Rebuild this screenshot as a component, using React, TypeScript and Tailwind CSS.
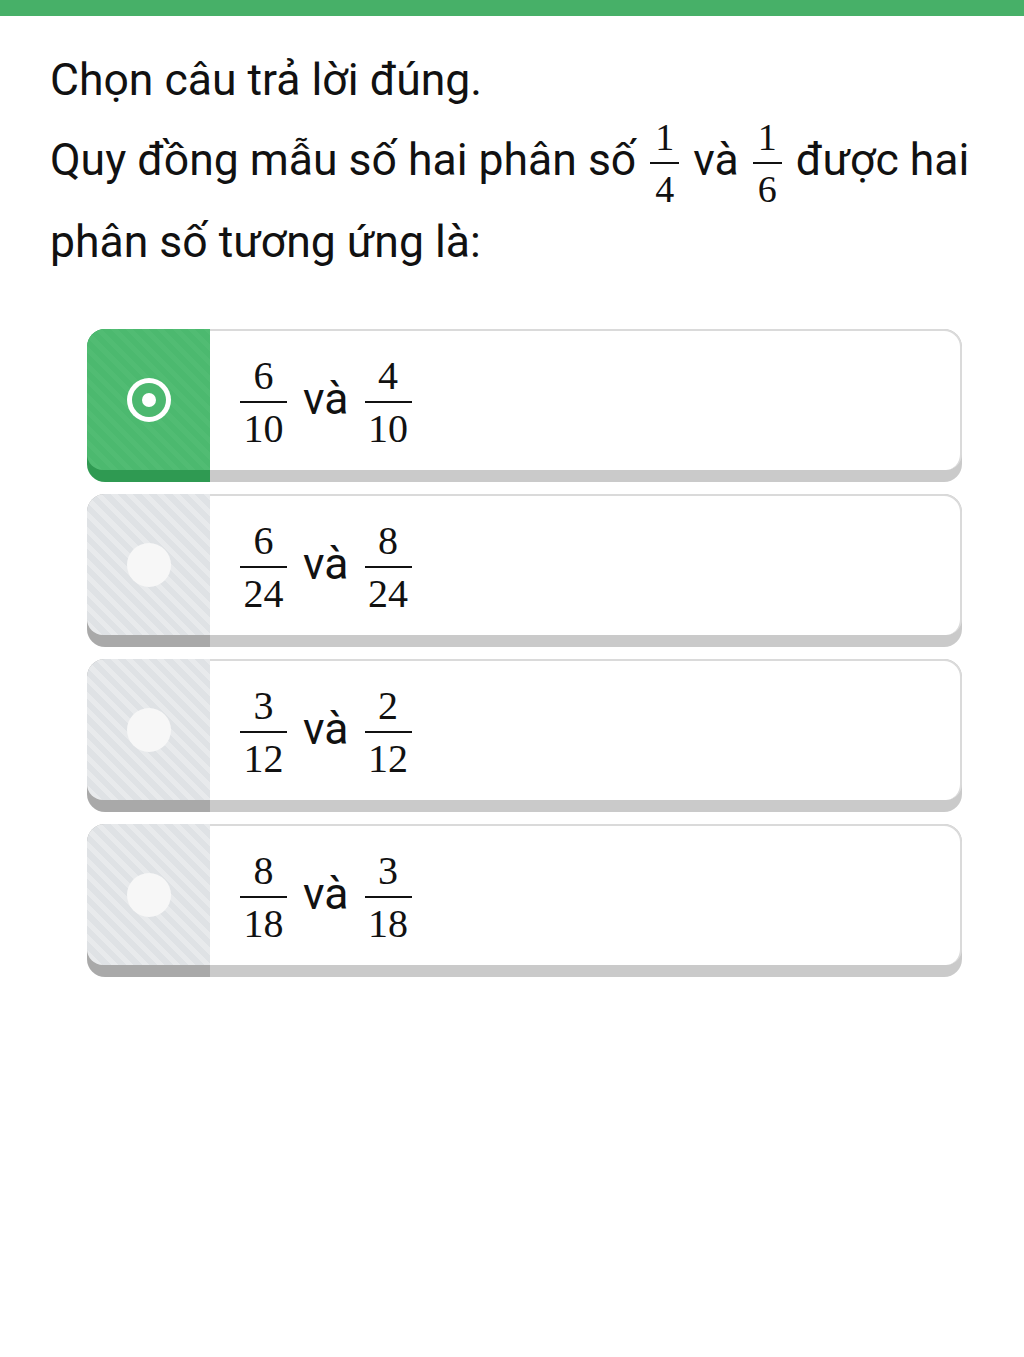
import React from "react";

// stacked fraction, sits on the text's middle like in math mode
function Frac({ top, bottom, size = "q" }: { top: string; bottom: string; size?: "q" | "o" }) {
  const digits =
    size === "q"
      ? "px-[5px] text-[38px] leading-[26px]"
      : "px-[3.5px] text-[40px] leading-[27px]";
  return (
    <span
      className={
        size === "q"
          ? "mx-[3px] inline-flex flex-col items-center align-middle font-['Liberation_Serif',serif] text-[#111]"
          : "mx-[5px] inline-flex flex-col items-center align-middle font-['Liberation_Serif',serif] text-[#111]"
      }
    >
      <span className={`${digits} mb-[12px]`}>{top}</span>
      <span className="block h-[2px] w-full bg-[#111]" />
      <span className={`${digits} mt-[12px]`}>{bottom}</span>
    </span>
  );
}

function Radio({ selected }: { selected: boolean }) {
  if (selected) {
    return (
      <div className="flex h-[44px] w-[44px] items-center justify-center rounded-full bg-white">
        <div className="flex h-[34px] w-[34px] items-center justify-center rounded-full bg-[#4cb86f]">
          <div className="h-[14px] w-[14px] rounded-full bg-white" />
        </div>
      </div>
    );
  }
  return <div className="h-[44px] w-[44px] rounded-full bg-[#f7f7f7]" />;
}

function Option({ a, b, selected = false }: { a: [string, string]; b: [string, string]; selected?: boolean }) {
  return (
    <div className="flex h-[153px] overflow-hidden rounded-[18px]">
      <div className={selected ? "w-[123px] shrink-0 bg-[#2f9a52]" : "w-[123px] shrink-0 bg-[#a9a9a9]"}>
        <div
          className={
            selected
              ? "flex h-[141px] items-center justify-center rounded-bl-[16px] bg-[repeating-linear-gradient(45deg,#4cb96f_0px,#4cb96f_6px,#51bc73_6px,#51bc73_11px)]"
              : "flex h-[141px] items-center justify-center rounded-bl-[16px] bg-[repeating-linear-gradient(45deg,#dfe2e5_0px,#dfe2e5_6px,#e8eaec_6px,#e8eaec_11px)]"
          }
        >
          <Radio selected={selected} />
        </div>
      </div>
      <div className="flex-1 bg-[#cacaca]">
        <div className="flex h-[141px] items-center rounded-tr-[18px] rounded-br-[16px] border-t-2 border-r-2 border-[#dadada] bg-white pl-[25px]">
          <div className="text-[44.5px] leading-[80px] text-[#111]">
            <Frac top={a[0]} bottom={a[1]} size="o" /> và <Frac top={b[0]} bottom={b[1]} size="o" />
          </div>
        </div>
      </div>
    </div>
  );
}

export default function App() {
  const options: { a: [string, string]; b: [string, string] }[] = [
    { a: ["6", "10"], b: ["4", "10"] },
    { a: ["6", "24"], b: ["8", "24"] },
    { a: ["3", "12"], b: ["2", "12"] },
    { a: ["8", "18"], b: ["3", "18"] },
  ];

  return (
    <div className="min-h-screen bg-white font-[Roboto,sans-serif] text-[#111]">
      <div className="h-[16px] bg-[#47b068]" />

      <div className="pt-[24px] pl-[50px] pr-[30px] text-[44.5px] leading-[80px]">
        <div>Chọn câu trả lời đúng.</div>
        <div>
          Quy đồng mẫu số hai phân số <Frac top="1" bottom="4" /> và <Frac top="1" bottom="6" /> được hai
          phân số tương ứng là:
        </div>
      </div>

      <div className="mt-[47px] flex flex-col gap-[12px] pl-[87px] pr-[62px]">
        {options.map((o, i) => (
          <Option key={i} a={o.a} b={o.b} selected={i === 0} />
        ))}
      </div>
    </div>
  );
}
